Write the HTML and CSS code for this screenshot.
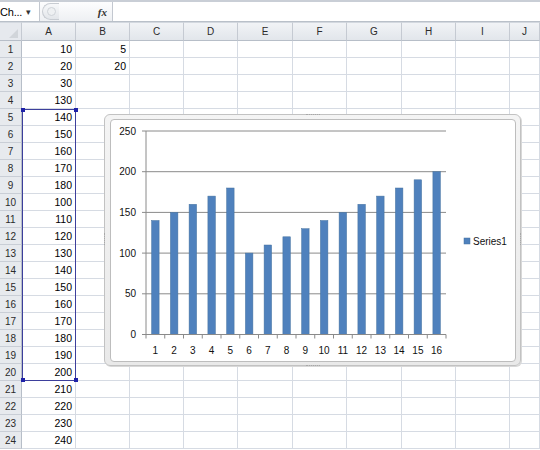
FILE: index.html
```html
<!DOCTYPE html>
<html>
<head>
<meta charset="utf-8">
<link rel="stylesheet" href="styles.css">
</head>
<body>
<div class="formula-bar">
  <div class="name-box"><span class="name-text">Ch...</span><span class="name-arrow">▾</span></div>
  <div class="fb-tools">
    <span class="pill"><span class="pill-dot"></span></span>
    <span class="fx">fx</span>
  </div>
  <div class="fb-input"></div>
</div>
<div class="sheet">
  <div class="row head">
    <div class="corner"><span class="corner-tri"></span></div>
    <div class="ch">A</div><div class="ch">B</div><div class="ch">C</div><div class="ch">D</div><div class="ch">E</div><div class="ch">F</div><div class="ch">G</div><div class="ch">H</div><div class="ch">I</div><div class="ch">J</div>
  </div>
  <div class="row"><div class="rh">1</div><div class="c">10</div><div class="c">5</div><div class="c"></div><div class="c"></div><div class="c"></div><div class="c"></div><div class="c"></div><div class="c"></div><div class="c"></div><div class="c"></div></div>
  <div class="row"><div class="rh">2</div><div class="c">20</div><div class="c">20</div><div class="c"></div><div class="c"></div><div class="c"></div><div class="c"></div><div class="c"></div><div class="c"></div><div class="c"></div><div class="c"></div></div>
  <div class="row"><div class="rh">3</div><div class="c">30</div><div class="c"></div><div class="c"></div><div class="c"></div><div class="c"></div><div class="c"></div><div class="c"></div><div class="c"></div><div class="c"></div><div class="c"></div></div>
  <div class="row"><div class="rh">4</div><div class="c">130</div><div class="c"></div><div class="c"></div><div class="c"></div><div class="c"></div><div class="c"></div><div class="c"></div><div class="c"></div><div class="c"></div><div class="c"></div></div>
  <div class="row"><div class="rh">5</div><div class="c">140</div><div class="c"></div><div class="c"></div><div class="c"></div><div class="c"></div><div class="c"></div><div class="c"></div><div class="c"></div><div class="c"></div><div class="c"></div></div>
  <div class="row"><div class="rh">6</div><div class="c">150</div><div class="c"></div><div class="c"></div><div class="c"></div><div class="c"></div><div class="c"></div><div class="c"></div><div class="c"></div><div class="c"></div><div class="c"></div></div>
  <div class="row"><div class="rh">7</div><div class="c">160</div><div class="c"></div><div class="c"></div><div class="c"></div><div class="c"></div><div class="c"></div><div class="c"></div><div class="c"></div><div class="c"></div><div class="c"></div></div>
  <div class="row"><div class="rh">8</div><div class="c">170</div><div class="c"></div><div class="c"></div><div class="c"></div><div class="c"></div><div class="c"></div><div class="c"></div><div class="c"></div><div class="c"></div><div class="c"></div></div>
  <div class="row"><div class="rh">9</div><div class="c">180</div><div class="c"></div><div class="c"></div><div class="c"></div><div class="c"></div><div class="c"></div><div class="c"></div><div class="c"></div><div class="c"></div><div class="c"></div></div>
  <div class="row"><div class="rh">10</div><div class="c">100</div><div class="c"></div><div class="c"></div><div class="c"></div><div class="c"></div><div class="c"></div><div class="c"></div><div class="c"></div><div class="c"></div><div class="c"></div></div>
  <div class="row"><div class="rh">11</div><div class="c">110</div><div class="c"></div><div class="c"></div><div class="c"></div><div class="c"></div><div class="c"></div><div class="c"></div><div class="c"></div><div class="c"></div><div class="c"></div></div>
  <div class="row"><div class="rh">12</div><div class="c">120</div><div class="c"></div><div class="c"></div><div class="c"></div><div class="c"></div><div class="c"></div><div class="c"></div><div class="c"></div><div class="c"></div><div class="c"></div></div>
  <div class="row"><div class="rh">13</div><div class="c">130</div><div class="c"></div><div class="c"></div><div class="c"></div><div class="c"></div><div class="c"></div><div class="c"></div><div class="c"></div><div class="c"></div><div class="c"></div></div>
  <div class="row"><div class="rh">14</div><div class="c">140</div><div class="c"></div><div class="c"></div><div class="c"></div><div class="c"></div><div class="c"></div><div class="c"></div><div class="c"></div><div class="c"></div><div class="c"></div></div>
  <div class="row"><div class="rh">15</div><div class="c">150</div><div class="c"></div><div class="c"></div><div class="c"></div><div class="c"></div><div class="c"></div><div class="c"></div><div class="c"></div><div class="c"></div><div class="c"></div></div>
  <div class="row"><div class="rh">16</div><div class="c">160</div><div class="c"></div><div class="c"></div><div class="c"></div><div class="c"></div><div class="c"></div><div class="c"></div><div class="c"></div><div class="c"></div><div class="c"></div></div>
  <div class="row"><div class="rh">17</div><div class="c">170</div><div class="c"></div><div class="c"></div><div class="c"></div><div class="c"></div><div class="c"></div><div class="c"></div><div class="c"></div><div class="c"></div><div class="c"></div></div>
  <div class="row"><div class="rh">18</div><div class="c">180</div><div class="c"></div><div class="c"></div><div class="c"></div><div class="c"></div><div class="c"></div><div class="c"></div><div class="c"></div><div class="c"></div><div class="c"></div></div>
  <div class="row"><div class="rh">19</div><div class="c">190</div><div class="c"></div><div class="c"></div><div class="c"></div><div class="c"></div><div class="c"></div><div class="c"></div><div class="c"></div><div class="c"></div><div class="c"></div></div>
  <div class="row"><div class="rh">20</div><div class="c">200</div><div class="c"></div><div class="c"></div><div class="c"></div><div class="c"></div><div class="c"></div><div class="c"></div><div class="c"></div><div class="c"></div><div class="c"></div></div>
  <div class="row"><div class="rh">21</div><div class="c">210</div><div class="c"></div><div class="c"></div><div class="c"></div><div class="c"></div><div class="c"></div><div class="c"></div><div class="c"></div><div class="c"></div><div class="c"></div></div>
  <div class="row"><div class="rh">22</div><div class="c">220</div><div class="c"></div><div class="c"></div><div class="c"></div><div class="c"></div><div class="c"></div><div class="c"></div><div class="c"></div><div class="c"></div><div class="c"></div></div>
  <div class="row"><div class="rh">23</div><div class="c">230</div><div class="c"></div><div class="c"></div><div class="c"></div><div class="c"></div><div class="c"></div><div class="c"></div><div class="c"></div><div class="c"></div><div class="c"></div></div>
  <div class="row"><div class="rh">24</div><div class="c">240</div><div class="c"></div><div class="c"></div><div class="c"></div><div class="c"></div><div class="c"></div><div class="c"></div><div class="c"></div><div class="c"></div><div class="c"></div></div>

  <div class="selection">
    <span class="handle tl"></span><span class="handle tr"></span><span class="handle bl"></span><span class="handle br"></span>
  </div>

  <div class="chart">
    <span class="grip grip-top"></span>
    <span class="grip grip-bottom"></span>
    <span class="grip grip-left"></span>
    <span class="grip grip-right"></span>
    <div class="chart-inner">
      <svg class="plot" width="405" height="242" viewBox="0 0 405 242">
        <g class="grid">
          <line x1="31" y1="11" x2="335" y2="11"/>
          <line x1="31" y1="51.7" x2="335" y2="51.7"/>
          <line x1="31" y1="92.4" x2="335" y2="92.4"/>
          <line x1="31" y1="133.1" x2="335" y2="133.1"/>
          <line x1="31" y1="173.8" x2="335" y2="173.8"/>
          <line x1="35" y1="11" x2="35" y2="214.5"/>
        </g>
        <g class="bars">
          <rect x="40.6" y="100.5" width="7.5" height="114"/>
          <rect x="59.4" y="92.4" width="7.5" height="122.1"/>
          <rect x="78.1" y="84.3" width="7.5" height="130.2"/>
          <rect x="96.9" y="76.1" width="7.5" height="138.4"/>
          <rect x="115.6" y="68" width="7.5" height="146.5"/>
          <rect x="134.4" y="133.1" width="7.5" height="81.4"/>
          <rect x="153.1" y="125" width="7.5" height="89.5"/>
          <rect x="171.9" y="116.8" width="7.5" height="97.7"/>
          <rect x="190.6" y="108.7" width="7.5" height="105.8"/>
          <rect x="209.4" y="100.5" width="7.5" height="114"/>
          <rect x="228.1" y="92.4" width="7.5" height="122.1"/>
          <rect x="246.9" y="84.3" width="7.5" height="130.2"/>
          <rect x="265.6" y="76.1" width="7.5" height="138.4"/>
          <rect x="284.4" y="68" width="7.5" height="146.5"/>
          <rect x="303.1" y="59.8" width="7.5" height="154.7"/>
          <rect x="321.9" y="51.7" width="7.5" height="162.8"/>
        </g>
        <g class="axis">
          <line x1="31" y1="214.5" x2="335" y2="214.5"/>
          <line x1="35" y1="214.5" x2="35" y2="218.5"/>
          <line x1="53.75" y1="214.5" x2="53.75" y2="218.5"/>
          <line x1="72.5" y1="214.5" x2="72.5" y2="218.5"/>
          <line x1="91.25" y1="214.5" x2="91.25" y2="218.5"/>
          <line x1="110" y1="214.5" x2="110" y2="218.5"/>
          <line x1="128.75" y1="214.5" x2="128.75" y2="218.5"/>
          <line x1="147.5" y1="214.5" x2="147.5" y2="218.5"/>
          <line x1="166.25" y1="214.5" x2="166.25" y2="218.5"/>
          <line x1="185" y1="214.5" x2="185" y2="218.5"/>
          <line x1="203.75" y1="214.5" x2="203.75" y2="218.5"/>
          <line x1="222.5" y1="214.5" x2="222.5" y2="218.5"/>
          <line x1="241.25" y1="214.5" x2="241.25" y2="218.5"/>
          <line x1="260" y1="214.5" x2="260" y2="218.5"/>
          <line x1="278.75" y1="214.5" x2="278.75" y2="218.5"/>
          <line x1="297.5" y1="214.5" x2="297.5" y2="218.5"/>
          <line x1="316.25" y1="214.5" x2="316.25" y2="218.5"/>
          <line x1="335" y1="214.5" x2="335" y2="218.5"/>
        </g>
        <g class="ylabels">
          <text x="25" y="14.5">250</text>
          <text x="25" y="55.2">200</text>
          <text x="25" y="95.9">150</text>
          <text x="25" y="136.6">100</text>
          <text x="25" y="177.3">50</text>
          <text x="25" y="218">0</text>
        </g>
        <g class="xlabels">
          <text x="44.4" y="234">1</text>
          <text x="63.1" y="234">2</text>
          <text x="81.9" y="234">3</text>
          <text x="100.6" y="234">4</text>
          <text x="119.4" y="234">5</text>
          <text x="138.1" y="234">6</text>
          <text x="156.9" y="234">7</text>
          <text x="175.6" y="234">8</text>
          <text x="194.4" y="234">9</text>
          <text x="213.1" y="234">10</text>
          <text x="231.9" y="234">11</text>
          <text x="250.6" y="234">12</text>
          <text x="269.4" y="234">13</text>
          <text x="288.1" y="234">14</text>
          <text x="306.9" y="234">15</text>
          <text x="325.6" y="234">16</text>
        </g>
        <g class="legend">
          <rect x="353" y="118" width="6" height="6"/>
          <text x="362" y="125">Series1</text>
        </g>
      </svg>
    </div>
  </div>
</div>
</body>
</html>
```
FILE: styles.css
```css
html, body {
  margin: 0;
  padding: 0;
  background: #ffffff;
}
body {
  width: 540px;
  height: 450px;
  overflow: hidden;
  font-family: "Liberation Sans", Arial, sans-serif;
  font-size: 10px;
  color: #000;
}

/* formula bar */
.formula-bar {
  display: flex;
  height: 22px;
  box-sizing: border-box;
  border-top: 2px solid #c9ced6;
  border-bottom: 1px solid #b9c0c9;
  background: #f3f5f8;
}
.name-box {
  width: 40px;
  display: flex;
  align-items: center;
  background: #fff;
  border-right: 1px solid #c3c8d0;
  box-sizing: border-box;
  font-size: 11px;
}
.name-text {
  margin-left: 0;
  letter-spacing: -0.2px;
}
.name-arrow {
  margin-left: 4px;
  font-size: 9px;
  color: #333;
}
.fb-tools {
  width: 72px;
  display: flex;
  align-items: center;
  background: linear-gradient(#fdfdfe, #eef0f3);
  position: relative;
}
.pill {
  width: 16px;
  height: 15px;
  margin-left: 2px;
  border: 1px solid #c8ccd2;
  border-right: none;
  border-radius: 9px 0 0 9px;
  background: linear-gradient(#f7f8fa, #e3e6ea);
  display: flex;
  align-items: center;
  justify-content: center;
}
.pill-dot {
  width: 7px;
  height: 7px;
  border-radius: 50%;
  border: 1px solid #cfd3d8;
  background: #eef0f2;
}
.fx {
  margin-left: auto;
  margin-right: 5px;
  font-family: "Liberation Serif", "Times New Roman", serif;
  font-style: italic;
  font-weight: bold;
  font-size: 11px;
  color: #333;
}
.fb-input {
  flex: 1;
  background: #fff;
  border-left: 1px solid #c3c8d0;
}

/* sheet */
.sheet {
  position: relative;
}
.row {
  display: grid;
  grid-template-columns: 22px 54px 54px 54px 54px 55px 54px 55px 54px 54px 1fr;
  height: 17px;
}
.row.head {
  height: 19px;
}
.corner, .ch, .rh, .c {
  box-sizing: border-box;
}
.corner {
  background: #e6e9ee;
  border-right: 1px solid #c5cad2;
  border-bottom: 1px solid #b7bec8;
  border-top: 1px solid #d3d8df;
  position: relative;
}
.corner-tri {
  position: absolute;
  right: 3px;
  bottom: 2px;
  width: 0;
  height: 0;
  border-left: 9px solid transparent;
  border-bottom: 9px solid #d1d5da;
}
.ch {
  background: linear-gradient(#f1f3f6, #e2e6eb);
  border-right: 1px solid #c5cad2;
  border-bottom: 1px solid #b7bec8;
  border-top: 1px solid #d3d8df;
  display: flex;
  align-items: center;
  justify-content: center;
  font-size: 10px;
  color: #2b2b2b;
}
.rh {
  background: #e7eaee;
  border-right: 1px solid #b7bec8;
  border-bottom: 1px solid #c9ced6;
  display: flex;
  align-items: center;
  justify-content: center;
  font-size: 10px;
  color: #2b2b2b;
}
.c {
  border-right: 1px solid #d6dbe3;
  border-bottom: 1px solid #d6dbe3;
  display: flex;
  align-items: center;
  justify-content: flex-end;
  padding-right: 3px;
  font-size: 10.5px;
}

/* chart data range highlight */
.selection {
  position: absolute;
  left: 22px;
  top: 87px;
  width: 54px;
  height: 272px;
  box-sizing: border-box;
  border: 1px solid #3d3f9c;
}
.handle {
  position: absolute;
  width: 4px;
  height: 4px;
  background: #1f22a8;
}
.handle.tl { left: -2px; top: -2px; }
.handle.tr { right: -3px; top: -2px; }
.handle.bl { left: -2px; bottom: -2px; }
.handle.br { right: -3px; bottom: -2px; }

/* chart */
.chart {
  position: absolute;
  left: 104px;
  top: 92px;
  width: 417px;
  height: 252px;
  box-sizing: border-box;
  border: 1px solid #c2c2c2;
  border-radius: 6px;
  background: linear-gradient(#f4f4f4, #e9e9e9);
  padding: 4px 4px 3px 5px;
  box-shadow: 1px 1px 0 #d8d8d8;
}
.chart-inner {
  width: 100%;
  height: 100%;
  box-sizing: border-box;
  border: 1px solid #bdbdbd;
  border-radius: 4px;
  background: #fff;
  overflow: hidden;
}
.plot {
  display: block;
}
.grid line {
  stroke: #8a8a8a;
  stroke-width: 1;
}
.axis line {
  stroke: #8a8a8a;
  stroke-width: 1;
}
.bars rect {
  fill: #4f81bd;
  stroke: #45729f;
  stroke-width: 0.5;
}
.ylabels text {
  font-family: "Liberation Sans", Arial, sans-serif;
  font-size: 10px;
  text-anchor: end;
  fill: #111;
}
.xlabels text {
  font-family: "Liberation Sans", Arial, sans-serif;
  font-size: 10px;
  text-anchor: middle;
  fill: #111;
}
.legend rect {
  fill: #4f81bd;
  stroke: #45729f;
  stroke-width: 0.5;
}
.legend text {
  font-family: "Liberation Sans", Arial, sans-serif;
  font-size: 10px;
  fill: #111;
}
.grip {
  position: absolute;
  border-color: #a8a8a8;
  border-style: dotted;
  border-width: 0;
}
.grip-top {
  left: 201px;
  top: -1px;
  width: 14px;
  height: 0;
  border-top-width: 1px;
}
.grip-bottom {
  left: 201px;
  bottom: -1px;
  width: 14px;
  height: 0;
  border-bottom-width: 1px;
}
.grip-left {
  left: -1px;
  top: 118px;
  width: 0;
  height: 12px;
  border-left-width: 1px;
}
.grip-right {
  right: -1px;
  top: 118px;
  width: 0;
  height: 12px;
  border-right-width: 1px;
}
```
